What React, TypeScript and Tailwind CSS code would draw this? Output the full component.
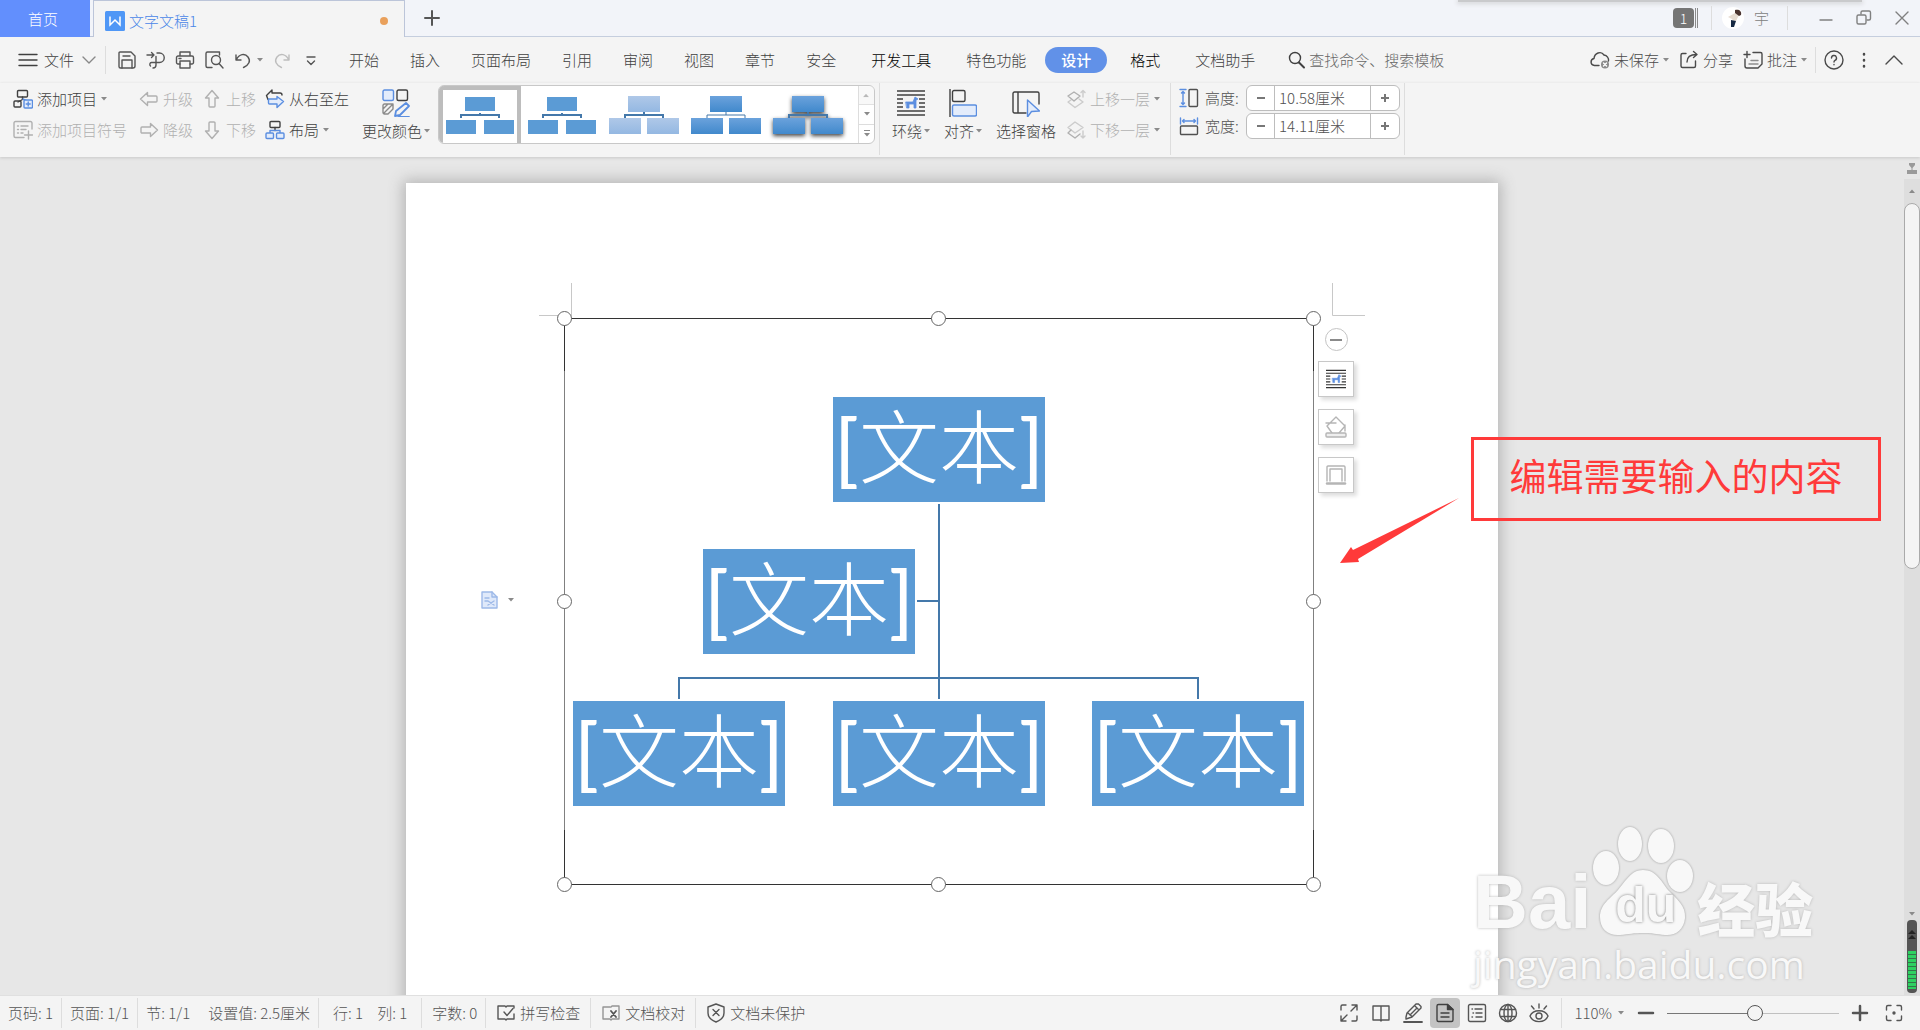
import type { ReactNode } from "react";

type IconProps = { children: ReactNode; className?: string; box?: string };

function Icon({ children, className = "size-5", box = "0 0 20 20" }: IconProps) {
  return (
    <svg
      viewBox={box}
      className={`shrink-0 ${className}`}
      fill="none"
      stroke="currentColor"
      strokeWidth="1.4"
      strokeLinecap="round"
      strokeLinejoin="round"
      aria-hidden="true"
    >
      {children}
    </svg>
  );
}

function Caret() {
  return (
    <svg viewBox="0 0 6 4" className="h-1 w-1.5 shrink-0 fill-[#8a8a8a]" aria-hidden="true">
      <path d="M0 0h6L3 3.5z" />
    </svg>
  );
}

function Divider({ className = "h-[72px]" }: { className?: string }) {
  return <div className={`w-px shrink-0 bg-[#dddddd] ${className}`} />;
}

const blue = "#5b8ee0";

const icons = {
  save: (
    <>
      <path d="M3 2h11l4 4v10a2 2 0 0 1-2 2H3.500a1.500 1.500 0 0 1-1.500-1.500V3a1 1 0 0 1 1-1z" />
      <path d="M5 18v-8h10v8M6 6h7" />
    </>
  ),
  pdf: (
    <>
      <path d="M1 5h7M5.500 2.500 8 5 5.500 7.500" />
      <path d="M11 3h2.500a4.500 4.500 0 0 1 0 9.500H5.500a2 2 0 0 0-1 3.500M7 18c2 0 3-1 3-3V6.500" />
    </>
  ),
  print: (
    <>
      <path d="M5 6V2h10v4M5 14H3a1.500 1.500 0 0 1-1.500-1.500v-5A1.500 1.500 0 0 1 3 6h14a1.500 1.500 0 0 1 1.500 1.500v5A1.500 1.500 0 0 1 17 14h-2" />
      <path d="M5 11h10v7H5zM4 8.500h2" />
    </>
  ),
  preview: (
    <>
      <path d="M8 17.500H3.500A1.500 1.500 0 0 1 2 16V3.500A1.500 1.500 0 0 1 3.500 2h12v3" />
      <circle cx="12" cy="10" r="4.500" />
      <path d="m15 13.500 4 4.500" />
    </>
  ),
  undo: <path d="M3 5v5h5M3.500 9.500C6 4 12 3 15 7s1 8-4.500 10.500" />,
  redo: <path d="M17 5v5h-5M16.500 9.500C14 4 8 3 5 7s-1 8 4.500 10.500" />,
  more: <path d="M6 7h8M6.500 11l3.500 3.500L13.500 11" />,
  addItem: (
    <>
      <rect x="4.500" y="1.500" width="10" height="6.500" rx="1" />
      <path d="M9.500 8v2.500L5 13" />
      <rect x="1" y="12" width="7" height="6" rx="1" />
      <g stroke={blue}>
        <path d="m10 10 4 2" />
        <rect x="11" y="11" width="8.500" height="8" rx="1" fill="#e3ecfb" />
        <path d="M15.200 13v4M13.200 15h4" />
      </g>
    </>
  ),
  addBullet: (
    <>
      <path d="M19 9V3a1.500 1.500 0 0 0-1.500-1.500h-15A1.500 1.500 0 0 0 1 3v13a1.500 1.500 0 0 0 1.500 1.500H11" />
      <path d="M4.500 6h1M8 6h7M4.500 9.500h1M8 9.500h5M4.500 13h1M8 13h2M15.500 11v8M11.500 15h8" />
    </>
  ),
  left: <path d="M8.500 3.500 1.500 10l7 6.500V13H17a1 1 0 0 0 1-1V8a1 1 0 0 0-1-1H8.500z" />,
  right: <path d="M11.500 3.500 18.500 10l-7 6.500V13H3a1 1 0 0 1-1-1V8a1 1 0 0 1 1-1h8.500z" />,
  up: <path d="M10 1.500 16.500 9H13v8a1 1 0 0 1-1 1H8a1 1 0 0 1-1-1V9H3.500z" />,
  down: <path d="M10 18.500 16.500 11H13V3a1 1 0 0 0-1-1H8a1 1 0 0 0-1 1v8H3.500z" />,
  rtl: (
    <>
      <path d="M3 10.500 1.500 6.500 7 1v3h8a2 2 0 0 1 2 2" />
      <path d="M3.500 10v4a1 1 0 0 0 1 1H12v3.500l6.500-6-6.500-5V10z" stroke={blue} fill="#e3ecfb" />
    </>
  ),
  layout: (
    <>
      <rect x="5" y="1.500" width="10" height="6" rx="1" />
      <path d="M10 7.500v3" />
      <g stroke={blue} fill="#e3ecfb">
        <path d="M5 13v-2.500h10V13" fill="none" />
        <rect x="1" y="13" width="7.500" height="5.500" rx="1" />
        <rect x="11.500" y="13" width="7.500" height="5.500" rx="1" />
      </g>
    </>
  ),
  layersUp: (
    <>
      <path d="M8 3 14 7 8 12 2 7z" />
      <path d="m5 11-3 2 7 5.500 8-5.500-4-3M17 8V1.500M15 3.500l2-2 2 2" opacity=".6" />
    </>
  ),
  layersDown: (
    <>
      <path d="m5 10-3 3 7 5 5-4" />
      <path d="m9 2 8 5.500-8 5.500-7-5.500zM17 11v7M15 16l2 2 2-2" opacity=".6" />
    </>
  ),
  height: (
    <>
      <path d="M1 1.500h6M1 18.500h6M4 3.500v13M2.500 5 4 3.500 5.500 5M2.500 15 4 16.500 5.500 15" stroke={blue} />
      <rect x="10" y="1.500" width="8.500" height="17" rx="1" />
    </>
  ),
  width: (
    <>
      <path d="M1.500 2v6M18.500 2v6M3.500 5h13M5 3.500 3.500 5 5 6.500M15 3.500 16.500 5 15 6.500" stroke={blue} />
      <rect x="1.500" y="10" width="17" height="8.500" rx="1" />
    </>
  ),
  search: (
    <>
      <circle cx="8" cy="8" r="5.500" />
      <path d="m12 12.500 5 5" strokeWidth="2" />
    </>
  ),
  cloud: (
    <>
      <path d="M9 15.500H4.500C0 15 0 9.500 4 8.500 4.500 3 11 .5 14 5c3 .5 5 3 4.500 6" />
      <circle cx="15" cy="14.500" r="4" fill="#8a8a8a" stroke="none" />
      <path d="m13.500 13 3 3M16.500 13l-3 3" stroke="#fff" />
    </>
  ),
  share: (
    <>
      <path d="M7 3.500H3.500A1.500 1.500 0 0 0 2 5v11a1.500 1.500 0 0 0 1.500 1.500H15a1.500 1.500 0 0 0 1.500-1.500v-5" />
      <path d="M8 12c0-4.500 3-7.500 9.500-7.500M14.500 1.500l3.500 3-3.500 3" />
    </>
  ),
  note: (
    <>
      <path d="M10 2.500h7.500A1.500 1.500 0 0 1 19 4v10l-4 4H4a2 2 0 0 1-2-2V9M1 4.500h6M4 1.500v6" />
      <path d="M8 10.500h7M6 14h9" opacity=".6" />
    </>
  ),
  help: (
    <>
      <circle cx="10" cy="10" r="9" />
      <path d="M7.500 8a2.500 2.500 0 1 1 3.500 2.300c-.7.400-1 .7-1 1.700M10 14.500v.2" />
    </>
  ),
  spell: (
    <>
      <path d="M10 4 9 3H2v13h7l1 1 1-1h7v-5M10 4l1-1h7v2" />
      <path d="m8 9 3 3.500 6-7" />
    </>
  ),
  proof: (
    <>
      <path d="M9 4H2v12h7l1 1 1-1h7V3h-7l-1 1" opacity=".6" />
      <path d="m10 8 5 6M15 8l-5 6" strokeWidth="1.800" />
    </>
  ),
  shield: (
    <>
      <path d="m10 1 8 3v6c0 4-3 7-8 9-5-2-8-5-8-9V4z" />
      <path d="m7 6.500 6 6M13 6.500l-6 6" />
    </>
  ),
  expand: (
    <>
      <path d="M7 2H3.500A1.500 1.500 0 0 0 2 3.500V7M18 13v3.500a1.500 1.500 0 0 1-1.500 1.500H13M12 8l6-6M13 2h5v5M8 12l-6 6M2 13v5h5" />
    </>
  ),
  book: <path d="M10 3H2v14h7l1 1 1-1h7V3h-8v15" />,
  pen: (
    <>
      <path d="m3 14 1-4 9-9h2.500L18 3.500V5l-9 9-6 2zM12 3l3 3M5 10l4 3.500M14 5l-7 7" />
      <path d="M1 19h18" strokeWidth="1.800" />
    </>
  ),
  page: (
    <>
      <path d="M12.500 1.500H3.500A1.500 1.500 0 0 0 2 3v14a1.500 1.500 0 0 0 1.500 1.500h13A1.500 1.500 0 0 0 18 17V6.500z" />
      <path d="M12.500 1.500v5H18z" fill="currentColor" />
      <path d="M6 10h8M6 14h8" />
    </>
  ),
  outline: (
    <>
      <rect x="1.500" y="1.500" width="17" height="17" rx="1.500" />
      <path d="M5 6h.5M8 6h7M6 10h.5M9 10h6M5 14h.5M9 14h6" />
    </>
  ),
  globe: (
    <>
      <circle cx="10" cy="10" r="8.500" />
      <ellipse cx="10" cy="10" rx="4" ry="8.500" />
      <path d="M10 1.500v17M2.500 6.500h15M2.500 13.500h15" />
    </>
  ),
  eye: (
    <>
      <path d="M1 13c3-7 15-7 18 0-3 7.500-15 7.500-18 0zM10 1v4M2.500 3l2.500 3M17.500 3 15 6" />
      <circle cx="10" cy="13" r="3" />
    </>
  ),
  fit: (
    <>
      <path d="M7 2.500H4A1.500 1.500 0 0 0 2.500 4v3M13 2.500h3A1.500 1.500 0 0 1 17.500 4v3M7 17.500H4A1.500 1.500 0 0 1 2.500 16v-3M13 17.500h3a1.500 1.500 0 0 0 1.500-1.500v-3" />
      <circle cx="10" cy="10" r="1" fill="currentColor" />
    </>
  ),
  palette: (
    <>
      <rect x="1" y="1" width="10.500" height="10.500" rx="1.500" stroke={blue} fill="#e3ecfb" />
      <rect x="15" y="1" width="10.500" height="10.500" rx="1.500" />
      <path d="M11 15v5l-5 5H2.500A1.500 1.500 0 0 1 1 23.500v-7A1.500 1.500 0 0 1 2.500 15zM1 20l5-5M2 24l9-9M6 25l5-5" stroke="#8a8a8a" />
      <path d="m13 27 1-5 10-8 3 3-9 9zM17 28h10" stroke={blue} strokeWidth="1.800" />
    </>
  ),
  wrap: (
    <>
      <path d="M0 2h28M0 6h28M0 22h28M0 26h28M0 10h6M0 14h6M0 18h6M22 10h6M22 14h6M22 18h6" strokeLinecap="butt" strokeWidth="1.600" />
      <path d="M9 13h7l2-5 3 2-2 1v8h-2v-4h-5v4h-2z" fill={blue} stroke={blue} strokeWidth=".8" />
    </>
  ),
  align: (
    <>
      <path d="M1 0v28" />
      <rect x="3.500" y="1.500" width="12.500" height="11" rx="1.500" />
      <rect x="3.500" y="16" width="24" height="11" rx="1.500" stroke={blue} fill="#e3ecfb" />
    </>
  ),
  pane: (
    <>
      <path d="M14 24H2.500A1.500 1.500 0 0 1 1 22.500v-18A1.500 1.500 0 0 1 2.500 3h23A1.500 1.500 0 0 1 27 4.500V15M6 3v21" />
      <path d="M15.500 11v17l4-5.500 8-.5z" stroke={blue} fill="#e3ecfb" />
    </>
  ),
};

const nearTabs = ["开始", "插入", "页面布局", "引用", "审阅", "视图", "章节", "安全"];

function TitleBar() {
  return (
    <header className="relative flex h-[37px] shrink-0 bg-[#f2f4f9]">
      <button className="w-[90px] bg-[#628ffd] pr-1 text-white">首页</button>
      <div className="w-[3px] border-b border-[#bcc5d9]" />
      <div className="flex w-[312px] items-center border-x border-t border-[#bcc5d9] bg-[#f4f4f4] pr-4 pb-px pl-[11px] pt-1">
        <svg viewBox="0 0 20 20" className="size-5 shrink-0" aria-hidden="true">
          <rect width="20" height="20" rx="1.500" fill="#4f97f6" />
          <path d="M5 5.500v8.500l5-5 5 5V5.500" fill="none" stroke="#fff" strokeWidth="1.500" />
        </svg>
        <button className="ml-1 flex-1 text-left text-[#4a86e8]">文字文稿1</button>
        <span className="size-2 rounded-full bg-[#e9a05b]" />
      </div>
      <div className="flex flex-1 items-center border-b border-[#c5cede] pl-[17px]">
        <button aria-label="新建" className="text-[#555]">
          <Icon>
            <path d="M10 3v14M3 10h14" strokeWidth="2" />
          </Icon>
        </button>
        <div className="ml-auto flex items-center text-[#808080]">
          <span className="flex h-5 w-[26px] items-stretch gap-px">
            <span className="w-[21px] rounded-sm bg-[#757575] text-center text-sm/5 text-white">1</span>
            <span className="w-px bg-[#8a8a8a]" />
            <span className="w-px bg-[#8a8a8a]" />
          </span>
          <Divider className="ml-3 h-6" />
          <svg viewBox="0 0 22 22" className="ml-2.5 size-[22px]" aria-hidden="true">
            <circle cx="11" cy="11" r="11" fill="#fff" />
            <path d="M6 10l7-4 4 2-3 6-2 1-2-3z" fill="#e6dcd2" />
            <path d="M13 3c4-1 7 1 6 5l-2 1-4-3z" fill="#4a3430" />
            <path d="m9 13 5 1-1 3-1 3h-3z" fill="#172a43" />
          </svg>
          <span className="ml-2.5">宇</span>
          <Divider className="ml-[18px] h-6" />
          <div className="ml-7 mr-2 flex gap-[18px]">
            <button aria-label="最小化">
              <Icon>
                <path d="M4 12h12" />
              </Icon>
            </button>
            <button aria-label="还原">
              <Icon>
                <rect x="3" y="7" width="9" height="9" rx="1.500" />
                <path d="M7 6V4.500A1.500 1.500 0 0 1 8.500 3H15a1.500 1.500 0 0 1 1.500 1.500v6A1.500 1.500 0 0 1 15 12h-2" />
              </Icon>
            </button>
            <button aria-label="关闭">
              <Icon>
                <path d="m4 4 12 12M16 4 4 16" />
              </Icon>
            </button>
          </div>
        </div>
      </div>
      <div className="absolute top-0 right-[58px] h-0.5 w-[404px] bg-[#c9cacc] shadow-[0_1px_4px_1px_#d5d6d9]" />
    </header>
  );
}

function MenuBar() {
  return (
    <nav className="flex h-[46px] shrink-0 items-center pl-[18px] whitespace-nowrap text-[#404040]">
      <button className="flex items-center">
        <Icon>
          <path d="M1 4.500h18M1 10h18M1 15.500h18" />
        </Icon>
        <span className="ml-1.5">文件</span>
        <Icon className="ml-[5px] size-5 text-[#888]">
          <path d="m4 7 6 6 6-6" />
        </Icon>
      </button>
      <Divider className="ml-1.5 h-7" />
      <div className="ml-[11px] flex items-center gap-[9px] text-[#555]">
        <button aria-label="保存"><Icon>{icons.save}</Icon></button>
        <button aria-label="输出为PDF"><Icon>{icons.pdf}</Icon></button>
        <button aria-label="打印"><Icon>{icons.print}</Icon></button>
        <button aria-label="打印预览"><Icon>{icons.preview}</Icon></button>
        <button aria-label="撤销" className="flex items-center gap-1"><Icon>{icons.undo}</Icon><Caret /></button>
        <button aria-label="恢复" className="text-[#bdbdbd]"><Icon>{icons.redo}</Icon></button>
        <button aria-label="更多"><Icon>{icons.more}</Icon></button>
      </div>
      <div className="ml-7 flex gap-[31px]">
        {nearTabs.map((tab) => (
          <button key={tab}>{tab}</button>
        ))}
      </div>
      <div className="ml-[35px] flex items-center">
        <button className="text-black">开发工具</button>
        <button className="ml-[35px]">特色功能</button>
        <button className="ml-[19px] h-[26px] rounded-full bg-[#6191e8] px-4 font-medium text-white">设计</button>
        <button className="ml-[23px] text-black">格式</button>
        <button className="ml-[35px]">文档助手</button>
      </div>
      <label className="ml-8 flex items-center gap-0.5">
        <Icon>{icons.search}</Icon>
        <input
          aria-label="搜索"
          className="w-40 bg-transparent outline-none placeholder:text-[#666] placeholder:opacity-100"
          placeholder="查找命令、搜索模板"
        />
      </label>
      <div className="ml-auto flex items-center pr-4 text-[#4a4a4a]">
        <button className="flex items-center gap-1"><Icon>{icons.cloud}</Icon>未保存<Caret /></button>
        <button className="ml-2.5 flex items-center gap-1"><Icon>{icons.share}</Icon>分享</button>
        <button className="ml-2.5 flex items-center gap-1"><Icon>{icons.note}</Icon>批注<Caret /></button>
        <Divider className="mx-2 h-[26px]" />
        <button aria-label="帮助"><Icon>{icons.help}</Icon></button>
        <button aria-label="选项" className="ml-2.5">
          <Icon>
            <path d="M10 4v.5M10 10v.5M10 16v.5" strokeWidth="2.500" />
          </Icon>
        </button>
        <button aria-label="收起功能区" className="ml-2.5">
          <Icon>
            <path d="m2 14 8-8 8 8" />
          </Icon>
        </button>
      </div>
    </nav>
  );
}

type RowButtonProps = { icon: ReactNode; label: string; caret?: boolean; disabled?: boolean };

function RowButton({ icon, label, caret, disabled }: RowButtonProps) {
  return (
    <button disabled={disabled} className="flex h-[31px] items-center gap-1 text-[#404040] disabled:text-[#b0b0b0]">
      <Icon>{icon}</Icon>
      {label}
      {caret && <Caret />}
    </button>
  );
}

function TallButton({ icon, label, caret }: RowButtonProps) {
  return (
    <button className="flex flex-col items-center gap-1 pt-1.5 text-[#404040]">
      <Icon className="size-7" box="0 0 28 28">{icon}</Icon>
      <span className="flex h-5 items-center gap-0.5">
        {label}
        {caret && <Caret />}
      </span>
    </button>
  );
}

const thumbs = [
  { fill: "#5b9bd5", large: false, shadow: false, line: 2 },
  { fill: "#5b9bd5", large: false, shadow: false, line: 2 },
  { fill: "url(#pale)", large: true, shadow: false, line: 2 },
  { fill: "url(#strong)", large: true, shadow: false, line: 1 },
  { fill: "url(#strong)", large: true, shadow: true, line: 2 },
];

function Gallery() {
  return (
    <div className="mt-0.5 ml-2 flex h-[59px] w-[437px] overflow-hidden rounded-md border border-[#c8c8c8] bg-white">
      <svg className="absolute size-0" aria-hidden="true">
        <defs>
          <linearGradient id="pale" x2="0" y2="1">
            <stop stopColor="#afc8e8" />
            <stop offset="1" stopColor="#94b8e2" />
          </linearGradient>
          <linearGradient id="strong" x2="0" y2="1">
            <stop stopColor="#6ba2dc" />
            <stop offset="1" stopColor="#4189cc" />
          </linearGradient>
        </defs>
      </svg>
      {thumbs.map((thumb, i) => (
        <button
          key={i}
          aria-label={`样式 ${i + 1}`}
          className={`flex w-[82px] items-center justify-center ${i === 0 ? "border-x-4 border-t-4 border-[#bdbdbd] pb-1" : ""}`}
        >
          <svg
            viewBox="0 0 72 48"
            className={`h-12 w-[72px] shrink-0 ${thumb.shadow ? "drop-shadow-[0_2px_2px_#444]" : ""}`}
          >
            <path
              d={thumb.large ? "M17 28v-4h38v4M36 24v-4" : "M17 27v-3h38v3M36 24v-2"}
              fill="none"
              stroke="#4478aa"
              strokeWidth={thumb.line}
            />
            {thumb.large ? (
              <g fill={thumb.fill}>
                <rect x="20" y="5" width="32" height="16" />
                <rect x="1" y="27" width="32" height="16" />
                <rect x="39" y="27" width="32" height="16" />
              </g>
            ) : (
              <g fill={thumb.fill}>
                <rect x="21" y="6" width="30" height="14" />
                <rect x="2" y="29" width="30" height="14" />
                <rect x="40" y="29" width="30" height="14" />
              </g>
            )}
          </svg>
        </button>
      ))}
      <div className="ml-auto flex w-4 flex-col border-l border-[#dddddd]">
        <button aria-label="上一行" className="flex flex-1 rotate-180 items-center justify-center bg-[#f4f4f4] opacity-60"><Caret /></button>
        <button aria-label="下一行" className="flex flex-1 items-center justify-center border-y border-[#dddddd]"><Caret /></button>
        <button aria-label="全部样式" className="flex flex-1 flex-col items-center justify-center gap-0.5">
          <span className="h-px w-1.5 bg-[#8a8a8a]" />
          <Caret />
        </button>
      </div>
    </div>
  );
}

function SizeField({ id, icon, label, value }: { id: string; icon: ReactNode; label: string; value: string }) {
  return (
    <div className="flex items-center text-[#505050]">
      <Icon>{icon}</Icon>
      <label htmlFor={id} className="ml-1.5 w-[41px]">{label}</label>
      <div className="flex h-[26px] w-[154px] overflow-hidden rounded-md border border-[#bdbdbd] bg-white">
        <button aria-label={`减小${label}`} className="w-7 border-r border-[#bdbdbd]">
          <span className="mx-auto block h-0.5 w-2 bg-[#777]" />
        </button>
        <input id={id} defaultValue={value} className="w-0 flex-1 pl-1 outline-none" />
        <button aria-label={`增大${label}`} className="flex w-[29px] items-center justify-center border-l border-[#bdbdbd] text-[#777]">
          <Icon className="size-2.5" box="0 0 10 10">
            <path d="M5 1v8M1 5h8" strokeWidth="2" strokeLinecap="butt" />
          </Icon>
        </button>
      </div>
    </div>
  );
}

function Ribbon() {
  return (
    <div className="z-10 flex h-[74px] shrink-0 whitespace-nowrap pl-[13px] shadow-[0_1px_3px_#c8c8c8]">
      <div className="w-[126px]">
        <RowButton icon={icons.addItem} label="添加项目" caret />
        <RowButton icon={icons.addBullet} label="添加项目符号" disabled />
      </div>
      <div className="w-[63px]">
        <RowButton icon={icons.left} label="升级" disabled />
        <RowButton icon={icons.right} label="降级" disabled />
      </div>
      <div className="w-[63px]">
        <RowButton icon={icons.up} label="上移" disabled />
        <RowButton icon={icons.down} label="下移" disabled />
      </div>
      <div className="w-[97px]">
        <RowButton icon={icons.rtl} label="从右至左" />
        <RowButton icon={icons.layout} label="布局" caret />
      </div>
      <TallButton icon={icons.palette} label="更改颜色" caret />
      <Gallery />
      <Divider className="ml-1 h-[72px]" />
      <div className="ml-3 flex gap-3.5">
        <TallButton icon={icons.wrap} label="环绕" caret />
        <TallButton icon={icons.align} label="对齐" caret />
        <TallButton icon={icons.pane} label="选择窗格" />
      </div>
      <div className="ml-2.5">
        <RowButton icon={icons.layersUp} label="上移一层" caret disabled />
        <RowButton icon={icons.layersDown} label="下移一层" caret disabled />
      </div>
      <Divider className="ml-2.5 h-[72px]" />
      <div className="ml-2 flex flex-col gap-0.5 pt-0.5">
        <SizeField id="shape-height" icon={icons.height} label="高度:" value="10.58厘米" />
        <SizeField id="shape-width" icon={icons.width} label="宽度:" value="14.11厘米" />
      </div>
      <Divider className="ml-1 h-[72px]" />
    </div>
  );
}

// Canvas coordinates are relative to the top-left corner of the sheet
const nodes = [
  "left-[427px] top-[214px]",
  "left-[297px] top-[366px]",
  "left-[167px] top-[518px]",
  "left-[427px] top-[518px]",
  "left-[686px] top-[518px]",
];

const handles = [
  "left-[151px] top-[128px]",
  "left-[525px] top-[128px]",
  "left-[900px] top-[128px]",
  "left-[151px] top-[411px]",
  "left-[900px] top-[411px]",
  "left-[151px] top-[694px]",
  "left-[525px] top-[694px]",
  "left-[900px] top-[694px]",
];

function Sheet() {
  return (
    <div className="relative mx-auto mt-[26px] h-full w-[1092px] bg-white shadow-[0_0_14px_3px_#b5b5b5]">
      <svg viewBox="0 0 1092 812" className="absolute top-0 left-0 h-[812px] w-[1092px]" fill="none" aria-hidden="true">
        <path d="M165.500 100v32.500H133M926.500 100v32.500H959" stroke="#c8c8c8" />
        <path d="M158.500 135.500v566M907.500 135.500v566" stroke="#808080" />
        <path d="M158.500 188v-52.500h749V188M158.500 647v54.500h749V647" stroke="#333" />
        <path d="M533 321v195M511 418h22M273 516v-21h519v21" stroke="#4478aa" strokeWidth="2" />
      </svg>

      {nodes.map((place) => (
        <div
          key={place}
          className={`absolute flex h-[105px] w-[212px] items-center justify-center bg-[#5b9bd5] pb-2 font-['Lato','Noto_Sans_CJK_SC',sans-serif] text-[80px] leading-none font-light whitespace-nowrap text-white ${place}`}
        >
          <span className="font-medium">[</span>
          文本
          <span className="font-medium">]</span>
        </div>
      ))}

      {handles.map((place) => (
        <span key={place} className={`absolute size-[15px] rounded-full border border-[#666] bg-white ${place}`} />
      ))}

      <button aria-label="页面选项" className="absolute top-[407px] left-[74px] flex items-center gap-2 text-[#9db9e8]">
        <Icon>
          <path d="M2 2h10l5 5v11H2z" fill="#dfe9fa" />
          <path d="M12 2v5h5M5 8h4M5 11h3M8 11l6 4M14 11l-6 4" />
        </Icon>
        <Caret />
      </button>

      <div className="absolute top-[145px] left-[912px] flex flex-col items-center">
        <button aria-label="收起" className="mb-2.5 flex size-[23px] items-center justify-center rounded-full border border-[#c4c4c4]">
          <span className="h-0.5 w-3 bg-[#8a8a8a]" />
        </button>
        <div className="flex flex-col gap-3">
          <button aria-label="布局选项" className="flex size-9 items-center justify-center border border-[#c8c8c8] bg-white text-[#333] shadow-[3px_3px_4px_#dddddd]">
            <Icon box="0 0 28 28">{icons.wrap}</Icon>
          </button>
          <button aria-label="填充" className="flex size-9 items-center justify-center border border-[#c8c8c8] bg-white text-[#b5b5b5] shadow-[3px_3px_4px_#dddddd]">
            <Icon className="size-[22px]" box="0 0 22 22">
              <path d="m7 17-5-7 9-9 9 9-6 7M1 7h10M20 9v6" />
              <rect x="1" y="17" width="20" height="4" rx="1" fill="#eee" />
            </Icon>
          </button>
          <button aria-label="轮廓" className="flex size-9 items-center justify-center border border-[#c8c8c8] bg-white text-[#b5b5b5] shadow-[3px_3px_4px_#dddddd]">
            <Icon className="size-[22px]" box="0 0 22 22">
              <path d="M2 17V3a1 1 0 0 1 1-1h16a1 1 0 0 1 1 1v14M5 17V5h12v12" />
              <path d="M2 19.500h18" strokeWidth="2.500" />
            </Icon>
          </button>
        </div>
      </div>
    </div>
  );
}

function Watermark() {
  return (
    <div className="pointer-events-none absolute right-[87px] bottom-0 w-[344px] text-[#f8f8f8] [text-shadow:0_0_3px_#b5b5b5]">
      <div className="flex h-[114px] items-end">
        <span className="font-['Liberation_Sans',sans-serif] text-[76px]/[76px] font-bold">Bai</span>
        <div className="relative h-[116px] w-[106px]">
          <svg viewBox="0 0 106 116" className="size-full drop-shadow-[0_0_1px_#999]" fill="#f8f8f8">
            <ellipse cx="15" cy="44" rx="13" ry="17" />
            <ellipse cx="39" cy="20" rx="12" ry="17" />
            <ellipse cx="70" cy="22" rx="13" ry="17" />
            <ellipse cx="89" cy="52" rx="13" ry="16" />
            <path d="M52 46c13 0 18 11 25 20 9 9 18 16 17 28-1 12-10 18-20 17-9-1-13-2-22-2s-14 1-23 2C17 112 9 105 9 93c0-13 11-19 18-27 8-9 13-20 25-20z" />
          </svg>
          <span className="absolute top-[56px] left-[24px] font-['Liberation_Sans',sans-serif] text-[50px]/[50px] font-bold [text-shadow:0_0_3px_#777]">du</span>
        </div>
        <span className="pb-1 text-[58px]/[58px] font-black">经验</span>
      </div>
      <p className="h-[55px] pt-0.5 font-['Open_Sans',sans-serif] text-[39px]/[44px] font-medium">jingyan.baidu.com</p>
    </div>
  );
}

function Workspace() {
  return (
    <main className="flex min-h-0 flex-1 bg-[#e7e7e7]">
      <div className="relative min-w-0 flex-1 overflow-hidden">
        <Sheet />
        <Watermark />
        <svg viewBox="0 0 122 68" className="absolute top-[340px] right-[443px] h-[68px] w-[122px] fill-[#ff3a3a]" aria-hidden="true">
          <path d="M120 1 19 62l1 3-19 1 11-16 2 3z" />
        </svg>
        <div className="absolute top-[280px] right-[23px] flex h-[84px] w-[410px] items-center justify-center border-[3px] border-[#ff3a3a] pb-2 text-[37px] leading-none font-normal whitespace-nowrap text-[#ff3a3a]">
          编辑需要输入的内容
        </div>
      </div>
      <div className="flex w-4 flex-col items-center">
        <svg viewBox="0 0 10 12" className="mt-1.5 mb-0.5 h-3 w-2.5 fill-[#9a9a9a]" aria-hidden="true">
          <path d="M2 0h6v2L5.500 5v2H10v4H0V7h4.500V5L2 2z" />
        </svg>
        <div className="mt-0.5 flex min-h-0 w-full flex-1 flex-col items-center bg-[#dedede]">
          <button aria-label="向上滚动" className="flex h-6 rotate-180 items-center"><Caret /></button>
          <div className="h-[366px] w-full rounded-full border border-[#aaa] bg-[#f4f4f4]" />
          <button aria-label="向下滚动" className="mt-auto flex h-3 items-center"><Caret /></button>
          <div className="mb-0.5 flex h-[73px] w-2.5 flex-col items-center rounded-sm bg-[#555]">
            <svg viewBox="0 0 8 9" className="mt-2.5 h-[9px] w-2 fill-[#222]" aria-hidden="true">
              <path d="M4 0l4 4H0zM4 5l4 4H0z" />
            </svg>
            <span className="mt-auto mb-1 h-[38px] w-2 bg-[repeating-linear-gradient(#2ed162_0_3px,#32764a_3px_4px)]" />
          </div>
        </div>
      </div>
    </main>
  );
}

function StatusBar() {
  return (
    <footer className="flex h-[35px] shrink-0 items-center border-t border-[#e0e0e0] pl-2 whitespace-nowrap text-[#555]">
      <span>页码: 1</span>
      <Divider className="mx-2 h-[30px]" />
      <span>页面: 1/1</span>
      <Divider className="mx-2 h-[30px]" />
      <span>节: 1/1</span>
      <span className="ml-[18px]">设置值: 2.5厘米</span>
      <Divider className="ml-2 h-[30px]" />
      <span className="ml-3.5">行: 1</span>
      <span className="ml-3.5">列: 1</span>
      <Divider className="ml-3.5 h-[30px]" />
      <span className="ml-2.5">字数: 0</span>
      <Divider className="ml-2 h-[30px]" />
      <button className="ml-2.5 flex items-center gap-1"><Icon>{icons.spell}</Icon>拼写检查</button>
      <Divider className="mx-2.5 h-[30px]" />
      <button className="flex items-center gap-1"><Icon>{icons.proof}</Icon>文档校对</button>
      <Divider className="mx-2.5 h-[30px]" />
      <button className="flex items-center gap-1"><Icon>{icons.shield}</Icon>文档未保护</button>

      <div className="ml-auto flex items-center pr-4">
        <div className="flex items-center gap-3">
          <button aria-label="全屏显示"><Icon>{icons.expand}</Icon></button>
          <button aria-label="阅读版式"><Icon>{icons.book}</Icon></button>
          <button aria-label="写作模式"><Icon>{icons.pen}</Icon></button>
        </div>
        <button aria-label="页面视图" className="mx-[7px] flex h-[30px] w-[30px] items-center justify-center rounded bg-[#c3c3c3] text-[#404040]">
          <Icon>{icons.page}</Icon>
        </button>
        <div className="flex items-center gap-[11px]">
          <button aria-label="大纲"><Icon>{icons.outline}</Icon></button>
          <button aria-label="Web版式"><Icon>{icons.globe}</Icon></button>
          <button aria-label="护眼模式"><Icon>{icons.eye}</Icon></button>
        </div>
        <Divider className="mx-3 h-[30px]" />
        <button className="flex items-center gap-1.5">110%<Caret /></button>
        <button aria-label="缩小" className="ml-3">
          <Icon>
            <path d="M3 10h14" strokeWidth="2.500" />
          </Icon>
        </button>
        <input
          type="range"
          aria-label="缩放"
          defaultValue={51}
          className="mx-[11px] h-5 w-[172px] appearance-none bg-transparent [&::-webkit-slider-runnable-track]:h-px [&::-webkit-slider-runnable-track]:bg-linear-to-r [&::-webkit-slider-runnable-track]:from-[#777] [&::-webkit-slider-runnable-track]:from-50% [&::-webkit-slider-runnable-track]:to-[#c0c0c0] [&::-webkit-slider-runnable-track]:to-50% [&::-webkit-slider-thumb]:-mt-2 [&::-webkit-slider-thumb]:size-4 [&::-webkit-slider-thumb]:appearance-none [&::-webkit-slider-thumb]:rounded-full [&::-webkit-slider-thumb]:border [&::-webkit-slider-thumb]:border-[#555] [&::-webkit-slider-thumb]:bg-[#f4f4f4]"
        />
        <button aria-label="放大">
          <Icon>
            <path d="M10 3v14M3 10h14" strokeWidth="2.500" />
          </Icon>
        </button>
        <button aria-label="最佳显示比例" className="ml-3.5"><Icon>{icons.fit}</Icon></button>
      </div>
    </footer>
  );
}

export default function App() {
  return (
    <div className="flex h-screen flex-col overflow-hidden bg-[#f4f4f4] font-['Noto_Sans_CJK_SC',sans-serif] text-[15px] leading-5 font-light">
      <TitleBar />
      <MenuBar />
      <Ribbon />
      <Workspace />
      <StatusBar />
    </div>
  );
}
